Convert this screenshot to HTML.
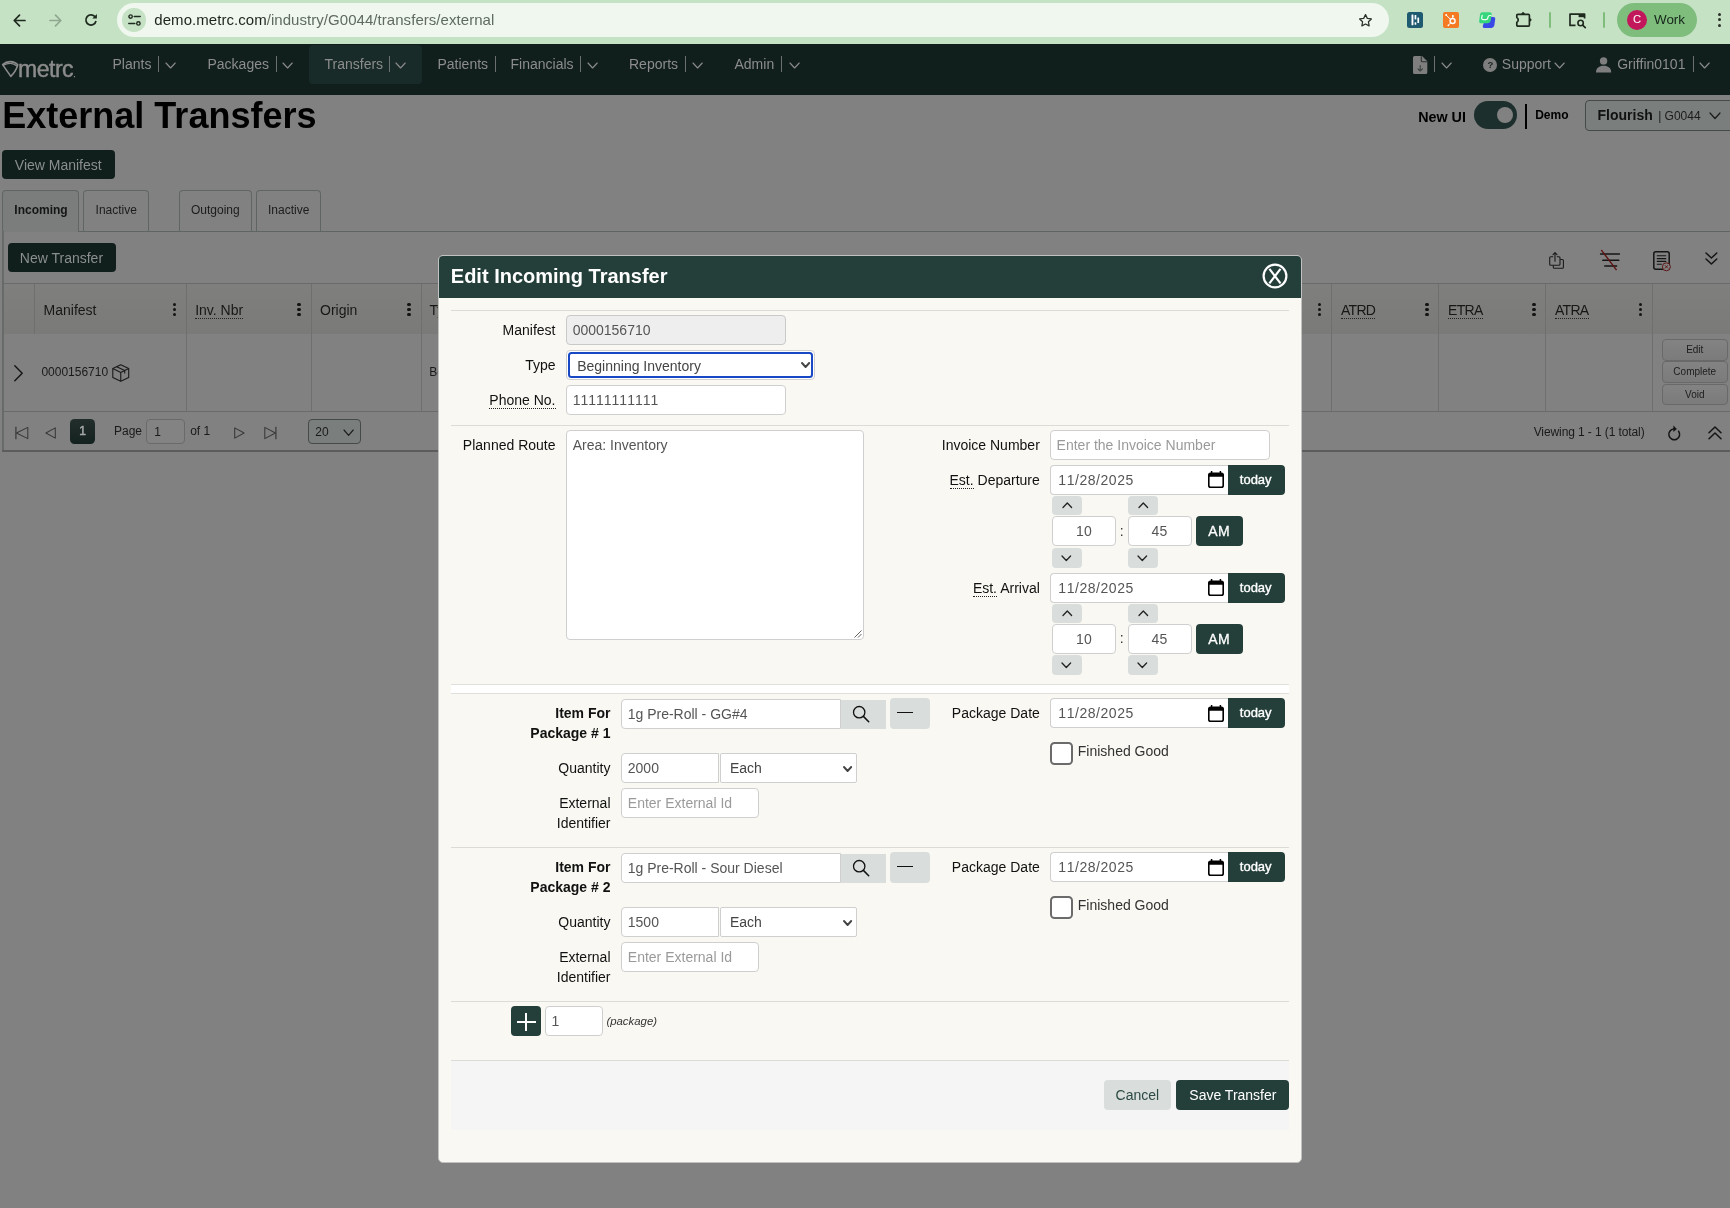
<!DOCTYPE html>
<html lang="en"><head><meta charset="utf-8"><title>External Transfers</title>
<style>
*{box-sizing:border-box;margin:0;padding:0}
html,body{width:1730px;height:1208px;overflow:hidden;background:#818181;font-family:"Liberation Sans",sans-serif;font-size:14px;color:#000}
#root{position:absolute;left:0;top:0;width:1730px;height:1208px;will-change:transform}
.a{position:absolute}
.t{position:absolute;white-space:nowrap;line-height:1}
svg{position:absolute;overflow:visible}
/* chrome */
#chrome{left:0;top:0;width:1730px;height:44px;background:#c6e2c5}
#pill{left:116.800px;top:3px;width:1272.300px;height:34px;border-radius:17px;background:#f0f7ef}
/* nav */
#nav{left:0;top:44px;width:1730px;height:50.6px;background:#101e1c}
.nt{color:#8d8d8d;font-size:14px}
.nsep{position:absolute;width:1px;height:15.500px;top:56.200px;background:#6b6f6d}
/* page */
.dbtn{position:absolute;background:#101e1c;border-radius:4px;color:#8a8f8d;font-size:14px}
.tab{position:absolute;top:190.4px;height:41.5px;border:1px solid #5f6563;border-bottom:none;border-radius:4px 4px 0 0;font-size:12px;color:#1c1c1c}
.vl{position:absolute;width:1px;background:#6f6f6f}
.hl{position:absolute;height:1px;background:#6a6a6a}
.ch{position:absolute;font-size:14px;color:#171717;line-height:1;white-space:nowrap}
.ch.u{border-bottom:1px dotted #222;padding-bottom:0px}
.gbtn{position:absolute;left:1661.5px;width:66.5px;height:21.5px;border:1px solid #696969;border-radius:4px;background:linear-gradient(#838383,#7b7b7b);font-size:10px;color:#1c1c1c;text-align:center;line-height:19px}
/* modal */
#modal{left:438px;top:255px;width:864.200px;height:907.500px;border-radius:5px;background:#f9f8f3;border:1px solid #c2c2c2;overflow:hidden}
#mhead{left:0;top:0;width:100%;height:41.700px;background:#243f3a}
.hr{position:absolute;left:451px;width:838px;height:1px;background:#dbdbd8}
.lbl{position:absolute;white-space:nowrap;line-height:1;font-size:14px;color:#111;text-align:right}
.inp{position:absolute;font-kerning:none;height:29.5px;border:1px solid #cfcfcf;border-radius:4px;background:#fff;font-size:14px;color:#555;line-height:27.5px;padding-left:5.400px;white-space:nowrap;overflow:hidden}
.ph{color:#9a9a9a}
.gb{position:absolute;background:#d9dddb;border-radius:4px}
.db{position:absolute;background:#243f3a;color:#fff;border-radius:4px}
.u2{border-bottom:1px dotted #222}
</style></head>
<body>
<div id="root">
<div class="a" id="chrome">
<div class="a" id="pill"></div>
<svg style="left:13px;top:13.5px" width="13" height="13" viewBox="0 0 13 13"><path d="M12 6.5H1.5M6.5 1.2L1.2 6.5L6.5 11.8" fill="none" stroke="#1f2a1f" stroke-width="1.7" stroke-linecap="round" stroke-linejoin="round"/></svg>
<svg style="left:49px;top:13.5px" width="13" height="13" viewBox="0 0 13 13"><path d="M1 6.5H11.5M6.5 1.2L11.8 6.5L6.5 11.8" fill="none" stroke="#8fa68f" stroke-width="1.7" stroke-linecap="round" stroke-linejoin="round"/></svg>
<svg style="left:85px;top:14px" width="12" height="12" viewBox="0 0 12 12"><path d="M10.200 3.100A5.100 5.100 0 1 0 11 7" fill="none" stroke="#1f2a1f" stroke-width="1.700" stroke-linecap="butt"/><path d="M11.900 .1V4.600H7.300z" fill="#1f2a1f"/></svg>
<div class="a" style="left:122.4px;top:8.4px;width:23.2px;height:23.2px;border-radius:50%;background:#c6e2c5"></div>
<svg style="left:127.5px;top:14px" width="13" height="12" viewBox="0 0 13 12"><circle cx="2.6" cy="2.6" r="1.7" fill="none" stroke="#1f2a1f" stroke-width="1.4"/><path d="M6.2 2.6H12.2M0.8 9.4H6.8" stroke="#1f2a1f" stroke-width="1.5" stroke-linecap="round"/><circle cx="10.4" cy="9.4" r="1.7" fill="none" stroke="#1f2a1f" stroke-width="1.4"/></svg>
<div class="t" style="left:154.3px;top:12.2px;font-size:15px;letter-spacing:0.05px;color:#1d231d">demo.metrc.com<span style="color:#5f6b5f">/industry/G0044/transfers/external</span></div>
<svg style="left:1357.5px;top:12.5px" width="15" height="15" viewBox="0 0 24 24"><path d="M12 2.6l2.9 6 6.5.9-4.7 4.6 1.1 6.5L12 17.5 6.2 20.6l1.1-6.5L2.6 9.5l6.5-.9z" fill="none" stroke="#2a332a" stroke-width="2" stroke-linejoin="round"/></svg>
<div class="a" style="left:1407px;top:12px;width:16px;height:16px;border-radius:2.5px;background:#1e5a70"></div>
<svg style="left:1407px;top:12px" width="16" height="16" viewBox="0 0 16 16"><rect x="4.500" y="2.600" width="1.900" height="10.600" rx=".5" fill="#fff"/><rect x="7.600" y="3" width="1.700" height="4.600" rx=".5" fill="#fff"/><rect x="7.600" y="10.200" width="1.700" height="2.600" rx=".5" fill="#fff"/><rect x="10.400" y="5.500" width="1.700" height="5.600" rx=".5" fill="#fff"/></svg>
<div class="a" style="left:1443px;top:12px;width:16px;height:16px;border-radius:2px;background:#f47a24"></div>
<svg style="left:1443px;top:12px" width="16" height="16" viewBox="0 0 16 16"><circle cx="9.600" cy="9" r="2.500" fill="none" stroke="#fff" stroke-width="1.400"/><path d="M9.800 6.400V4.200M7.600 7.400L3.400 3.300M7.700 10.900L5.600 13" stroke="#fff" stroke-width="1" stroke-linecap="round"/><circle cx="9.900" cy="3.900" r="1" fill="#fff"/><circle cx="3.200" cy="3" r="1" fill="#fff"/><circle cx="5.400" cy="13.300" r=".9" fill="#fff"/></svg>
<svg style="left:1479px;top:12px" width="16" height="16" viewBox="0 0 16 16"><path d="M6.800 5h7.400a2 2 0 0 1 2 2.300l-.9 6.300a3 3 0 0 1-3 2.400H5.800a2 2 0 0 1-2-2.300z" fill="#3a48e6"/><path d="M3 .2h7.600a2 2 0 0 1 2 2.300l-.9 6.300a3 3 0 0 1-3 2.400H2.200a2 2 0 0 1-2-2.300L1 2.400A2.400 2.400 0 0 1 3 .2z" fill="#35d67c"/><path d="M3.200 3.300l-.5 2.600a1.500 1.500 0 0 0 1.500 1.800h2.600a2 2 0 0 0 2-1.600l.3-1.400a1.500 1.500 0 0 1 1.500-1.200h1.200" fill="none" stroke="#f2fff6" stroke-width="1.200" stroke-linecap="round"/></svg>
<svg style="left:1515px;top:11px" width="17" height="17" viewBox="0 0 17 17"><path d="M2.800 3.400H13.400a1 1 0 0 1 1 1V14.100a1 1 0 0 1-1 1H2.800a1 1 0 0 1-1-1V11.400Q4.700 8.900 1.800 6.400V4.400a1 1 0 0 1 1-1Z" fill="none" stroke="#1f2a1f" stroke-width="1.700" stroke-linejoin="round"/><path d="M6.200 2.900Q8.100 -1 10 2.900z" fill="#1f2a1f"/><path d="M14.900 7.100Q18.300 8.900 14.900 10.700z" fill="#1f2a1f"/></svg>
<div class="a" style="left:1549.2px;top:12.4px;width:1.8px;height:15.2px;border-radius:1px;background:#7fbd7d"></div>
<svg style="left:1568.5px;top:12.5px" width="18" height="16" viewBox="0 0 18 16"><path d="M6.5 12.4H1V1.2h14.6v4.2" fill="none" stroke="#1f2a1f" stroke-width="1.7" stroke-linejoin="round"/><rect x="9.6" y="1.2" width="6" height="3" fill="#1f2a1f"/><circle cx="11.6" cy="10" r="2.7" fill="none" stroke="#1f2a1f" stroke-width="1.6"/><path d="M13.7 12.1l2.6 2.6" stroke="#1f2a1f" stroke-width="1.7" stroke-linecap="round"/></svg>
<div class="a" style="left:1603px;top:12.4px;width:1.8px;height:15.2px;border-radius:1px;background:#7fbd7d"></div>
<div class="a" style="left:1616.8px;top:3px;width:80.2px;height:33.8px;border-radius:17px;background:#7fbd7d"></div>
<div class="a" style="left:1626.8px;top:10.1px;width:19.8px;height:19.8px;border-radius:50%;background:#c2185b"></div>
<div class="t" style="left:1632.900px;top:14.400px;font-size:11.300px;color:#fff">C</div>
<div class="t" style="left:1654px;top:13.2px;font-size:13.4px;color:#16241a">Work</div>
<div class="a" style="left:1717.7px;top:13.1px;width:3px;height:3px;border-radius:50%;background:#2a332a"></div>
<div class="a" style="left:1717.7px;top:18.3px;width:3px;height:3px;border-radius:50%;background:#2a332a"></div>
<div class="a" style="left:1717.7px;top:23.5px;width:3px;height:3px;border-radius:50%;background:#2a332a"></div>
</div>
<div class="a" id="nav"></div>
<div class="a" style="left:309.200px;top:44.600px;width:113.300px;height:39.200px;border-radius:4px;background:#192b28"></div>
<svg style="left:1.800px;top:61.200px" width="16.400" height="16" viewBox="0 0 16.400 16"><path d="M.6 3.600C3 1.400 6 .5 8.600 .6c2.600.1 5 .9 7.200 3.200C14.600 8.200 12.400 12 8.800 15.400z" fill="none" stroke="#8c8c8c" stroke-width="1.600" stroke-linejoin="round"/><path d="M1.400 4.300C4 2.600 6.300 2.200 8.600 2.300c2.300.1 4.300.9 6.300 2.700" fill="none" stroke="#8c8c8c" stroke-width="1.300"/></svg>
<div class="t" style="left:18.100px;top:58.200px;font-size:23px;letter-spacing:-0.500px;color:#8c8c8c;-webkit-text-stroke:0.450px #8c8c8c">metrc<span style="font-size:7px;letter-spacing:0;margin-left:0.5px">.</span></div>
<div class="t nt" style="left:112.5px;top:56.600px">Plants</div>
<div class="nsep" style="left:158.25px"></div>
<svg style="left:166.4px;top:63px" width="9.2" height="5"><path d="M0 0 L4.6 5 L9.2 0" fill="none" stroke="#8a8a8a" stroke-width="1.15" stroke-linecap="round" stroke-linejoin="round"/></svg>
<div class="t nt" style="left:207.5px;top:56.600px">Packages</div>
<div class="nsep" style="left:275.5px"></div>
<svg style="left:282.9px;top:63px" width="9.2" height="5"><path d="M0 0 L4.6 5 L9.2 0" fill="none" stroke="#8a8a8a" stroke-width="1.15" stroke-linecap="round" stroke-linejoin="round"/></svg>
<div class="t nt" style="left:324.5px;top:56.600px">Transfers</div>
<div class="nsep" style="left:388.5px"></div>
<svg style="left:396.4px;top:63px" width="9.2" height="5"><path d="M0 0 L4.6 5 L9.2 0" fill="none" stroke="#8a8a8a" stroke-width="1.15" stroke-linecap="round" stroke-linejoin="round"/></svg>
<div class="t nt" style="left:437.5px;top:56.600px">Patients</div>
<div class="nsep" style="left:495.0px"></div>
<div class="t nt" style="left:510.5px;top:56.600px">Financials</div>
<div class="nsep" style="left:580.25px"></div>
<svg style="left:588.4px;top:63px" width="9.2" height="5"><path d="M0 0 L4.6 5 L9.2 0" fill="none" stroke="#8a8a8a" stroke-width="1.15" stroke-linecap="round" stroke-linejoin="round"/></svg>
<div class="t nt" style="left:629px;top:56.600px">Reports</div>
<div class="nsep" style="left:685.25px"></div>
<svg style="left:693.4px;top:63px" width="9.2" height="5"><path d="M0 0 L4.6 5 L9.2 0" fill="none" stroke="#8a8a8a" stroke-width="1.15" stroke-linecap="round" stroke-linejoin="round"/></svg>
<div class="t nt" style="left:734.5px;top:56.600px">Admin</div>
<div class="nsep" style="left:781.25px"></div>
<svg style="left:789.65px;top:63px" width="9.2" height="5"><path d="M0 0 L4.6 5 L9.2 0" fill="none" stroke="#8a8a8a" stroke-width="1.15" stroke-linecap="round" stroke-linejoin="round"/></svg>
<svg style="left:1413px;top:56px" width="15" height="18" viewBox="0 0 15 18"><path d="M1.500 0h7.500L14.300 5.300v11.200A1.500 1.500 0 0 1 12.800 18H1.500A1.500 1.500 0 0 1 0 16.500v-15A1.500 1.500 0 0 1 1.500 0z" fill="#7e7e7e"/><path d="M8.300 .2v4.600a1 1 0 0 0 1 1h4.800" fill="none" stroke="#2a3331" stroke-width="1.100"/><path d="M7.200 9.600v5.200M4.900 12.800l2.300 2.200 2.300-2.200" fill="none" stroke="#3c4442" stroke-width="1.150" stroke-linecap="round" stroke-linejoin="round"/></svg>
<div class="nsep" style="left:1434.25px"></div>
<svg style="left:1442.15px;top:63px" width="9.2" height="5"><path d="M0 0 L4.6 5 L9.2 0" fill="none" stroke="#8a8a8a" stroke-width="1.15" stroke-linecap="round" stroke-linejoin="round"/></svg>
<div class="a" style="left:1483px;top:57.900px;width:14.300px;height:14.300px;border-radius:50%;background:#7e7e7e"></div>
<div class="t" style="left:1487.500px;top:60.400px;font-size:9.600px;font-weight:bold;color:#1c2826">?</div>
<div class="t nt" style="left:1501.800px;top:56.600px">Support</div>
<svg style="left:1555.4px;top:63px" width="9.2" height="5"><path d="M0 0 L4.6 5 L9.2 0" fill="none" stroke="#8a8a8a" stroke-width="1.15" stroke-linecap="round" stroke-linejoin="round"/></svg>
<svg style="left:1596.2px;top:57.2px" width="15.200" height="15.400" viewBox="0 0 15.200 15.400"><circle cx="7.600" cy="3.900" r="3.700" fill="#7e7e7e"/><path d="M0 15.400c0-4.500 3.200-6.700 7.600-6.700s7.600 2.200 7.600 6.700z" fill="#7e7e7e"/></svg>
<div class="t nt" style="left:1617.2px;top:56.600px">Griffin0101</div>
<div class="nsep" style="left:1692.5px"></div>
<svg style="left:1700.4px;top:63px" width="9.2" height="5"><path d="M0 0 L4.6 5 L9.2 0" fill="none" stroke="#8a8a8a" stroke-width="1.15" stroke-linecap="round" stroke-linejoin="round"/></svg>
<div class="t" style="left:2.300px;top:98.200px;font-size:36px;font-weight:bold;color:#000">External Transfers</div>
<div class="t" style="left:1418.2px;top:110.4px;font-size:14.3px;font-weight:bold;color:#000">New UI</div>
<div class="a" style="left:1474px;top:101px;width:43px;height:28px;border-radius:14px;background:#1c2f2c"></div>
<div class="a" style="left:1497.200px;top:106.900px;width:16.300px;height:16.300px;border-radius:50%;background:#818181"></div>
<div class="a" style="left:1525px;top:104px;width:2px;height:25px;background:#000"></div>
<div class="t" style="left:1535.2px;top:109.2px;font-size:12px;font-weight:bold;color:#000">Demo</div>
<div class="a" style="left:1585px;top:100.2px;width:160px;height:30.5px;border:1px solid #444a48;border-radius:4px;background:#7a7e7c"></div>
<div class="t" style="left:1597.5px;top:107.6px;font-size:14px;font-weight:bold;color:#111">Flourish <span style="font-weight:normal;font-size:12px;color:#1c1c1c;position:relative;top:0.600px;margin-left:1.500px">|&nbsp;G0044</span></div>
<svg style="left:1709.6px;top:113px" width="10" height="5.5"><path d="M0 0 L5.0 5.5 L10 0" fill="none" stroke="#1a1a1a" stroke-width="1.2" stroke-linecap="round" stroke-linejoin="round"/></svg>
<div class="dbtn" style="left:2.4px;top:150.4px;width:112.2px;height:29px"></div><div class="t" style="left:14.8px;top:157.6px;font-size:14px;color:#8a8f8d">View Manifest</div>
<div class="hl" style="left:2.4px;top:231.4px;width:1728px;background:#5f6563"></div>
<div class="tab" style="left:2.4px;width:76.4px;background:#7b7d7c;height:42px"></div><div class="t" style="left:14.3px;top:204.3px;font-size:12px;font-weight:bold;color:#151515">Incoming</div>
<div class="tab" style="left:83.4px;width:65.4px"></div><div class="t" style="left:95.6px;top:204.3px;font-size:12px;color:#1c1c1c">Inactive</div>
<div class="tab" style="left:179.4px;width:72.4px"></div><div class="t" style="left:191px;top:204.3px;font-size:12px;color:#1c1c1c">Outgoing</div>
<div class="tab" style="left:256.4px;width:64.8px"></div><div class="t" style="left:268px;top:204.3px;font-size:12px;color:#1c1c1c">Inactive</div>
<div class="vl" style="left:2.4px;top:231.4px;height:220px;background:#666b69;width:1.3px"></div>
<div class="dbtn" style="left:7.6px;top:243.4px;width:108px;height:29px"></div><div class="t" style="left:19.8px;top:250.8px;font-size:14px;color:#8a8f8d">New Transfer</div>
<svg style="left:1548.500px;top:251.500px" width="15" height="17.500" viewBox="0 0 15 17.500"><path d="M4.200 4.800H1.700a1 1 0 0 0-1 1v6.400a1 1 0 0 0 1 1H10a1 1 0 0 0 1-1V5.800a1 1 0 0 0-1-1H7.800" fill="none" stroke="#1a1a1a" stroke-width="1.100"/><path d="M4.300 13.400v1.900a1 1 0 0 0 1 1H13.400a1 1 0 0 0 1-1V8.500a1 1 0 0 0-1-1H11.200" fill="none" stroke="#1a1a1a" stroke-width="1.100"/><path d="M6 9.200V.7M4 2.600L6 .6 8 2.600" fill="none" stroke="#1a1a1a" stroke-width="1.100" stroke-linecap="round" stroke-linejoin="round"/></svg>
<svg style="left:1599.5px;top:250px" width="20" height="20" viewBox="0 0 20 20"><path d="M.6 4h18.800M2.800 10.200h16M4.800 16h11.800" stroke="#141414" stroke-width="1.500" stroke-linecap="round"/><path d="M1.600 .4L16.200 19.600" stroke="#5e1414" stroke-width="1.400" stroke-linecap="round"/></svg>
<svg style="left:1653px;top:250.700px" width="20" height="21" viewBox="0 0 20 21"><rect x=".8" y=".8" width="15.400" height="17.400" rx="2" fill="none" stroke="#141414" stroke-width="1.500"/><path d="M3.800 4.800h9.400M3.800 7.600h9.400M3.800 10.400h9.400M3.800 13.200h5" stroke="#141414" stroke-width="1.100"/><circle cx="13.400" cy="15.800" r="4" fill="#818181" stroke="#5e1414" stroke-width="1"/><path d="M11.800 14.200l3.200 3.200M15 14.200l-3.200 3.200" stroke="#5e1414" stroke-width=".9"/></svg>
<svg style="left:1705.7px;top:252.8px" width="10.8" height="5"><path d="M0 0 L5.4 5 L10.8 0" fill="none" stroke="#141414" stroke-width="1.5" stroke-linecap="round" stroke-linejoin="round"/></svg>
<svg style="left:1705.7px;top:259.4px" width="10.8" height="5"><path d="M0 0 L5.4 5 L10.8 0" fill="none" stroke="#141414" stroke-width="1.5" stroke-linecap="round" stroke-linejoin="round"/></svg>
<div class="a" style="left:3.5px;top:284px;width:1727px;height:50px;background:linear-gradient(#7f807e,#7a7b78)"></div>
<div class="hl" style="left:3px;top:283.4px;width:1727px"></div>
<div class="hl" style="left:3px;top:411px;width:1727px"></div>
<div class="a" style="left:2.400px;top:449.900px;width:1728px;height:2.100px;background:#5c5c5c"></div>
<div class="vl" style="left:34px;top:284px;height:50px"></div>
<div class="vl" style="left:186px;top:284px;height:127px"></div>
<div class="vl" style="left:311px;top:284px;height:127px"></div>
<div class="vl" style="left:421px;top:284px;height:127px"></div>
<div class="vl" style="left:1331.2px;top:284px;height:127px"></div>
<div class="vl" style="left:1438.2px;top:284px;height:127px"></div>
<div class="vl" style="left:1545.2px;top:284px;height:127px"></div>
<div class="vl" style="left:1652.2px;top:284px;height:127px"></div>
<div class="ch" style="left:43.6px;top:303px">Manifest</div><div class="a" style="left:172.85px;top:303.05px;width:3.300px;height:3.300px;border-radius:50%;background:#141414"></div><div class="a" style="left:172.85px;top:307.95000000000005px;width:3.300px;height:3.300px;border-radius:50%;background:#141414"></div><div class="a" style="left:172.85px;top:312.85px;width:3.300px;height:3.300px;border-radius:50%;background:#141414"></div>
<div class="ch u" style="left:195.2px;top:303px;height:16px">Inv. Nbr</div><div class="a" style="left:297.35px;top:303.05px;width:3.300px;height:3.300px;border-radius:50%;background:#141414"></div><div class="a" style="left:297.35px;top:307.95000000000005px;width:3.300px;height:3.300px;border-radius:50%;background:#141414"></div><div class="a" style="left:297.35px;top:312.85px;width:3.300px;height:3.300px;border-radius:50%;background:#141414"></div>
<div class="ch" style="left:320px;top:303px">Origin</div><div class="a" style="left:407.35px;top:303.05px;width:3.300px;height:3.300px;border-radius:50%;background:#141414"></div><div class="a" style="left:407.35px;top:307.95000000000005px;width:3.300px;height:3.300px;border-radius:50%;background:#141414"></div><div class="a" style="left:407.35px;top:312.85px;width:3.300px;height:3.300px;border-radius:50%;background:#141414"></div>
<div class="ch" style="left:429.6px;top:303px">Ty</div>
<div class="a" style="left:1318.1px;top:303.05px;width:3.300px;height:3.300px;border-radius:50%;background:#141414"></div><div class="a" style="left:1318.1px;top:307.95000000000005px;width:3.300px;height:3.300px;border-radius:50%;background:#141414"></div><div class="a" style="left:1318.1px;top:312.85px;width:3.300px;height:3.300px;border-radius:50%;background:#141414"></div>
<div class="ch u" style="left:1341px;top:303.3px;height:16px;letter-spacing:-0.7px">ATRD</div><div class="a" style="left:1425.35px;top:303.05px;width:3.300px;height:3.300px;border-radius:50%;background:#141414"></div><div class="a" style="left:1425.35px;top:307.95000000000005px;width:3.300px;height:3.300px;border-radius:50%;background:#141414"></div><div class="a" style="left:1425.35px;top:312.85px;width:3.300px;height:3.300px;border-radius:50%;background:#141414"></div>
<div class="ch u" style="left:1448px;top:303.3px;height:16px;letter-spacing:-0.7px">ETRA</div><div class="a" style="left:1532.35px;top:303.05px;width:3.300px;height:3.300px;border-radius:50%;background:#141414"></div><div class="a" style="left:1532.35px;top:307.95000000000005px;width:3.300px;height:3.300px;border-radius:50%;background:#141414"></div><div class="a" style="left:1532.35px;top:312.85px;width:3.300px;height:3.300px;border-radius:50%;background:#141414"></div>
<div class="ch u" style="left:1555px;top:303.3px;height:16px;letter-spacing:-0.7px">ATRA</div><div class="a" style="left:1638.85px;top:303.05px;width:3.300px;height:3.300px;border-radius:50%;background:#141414"></div><div class="a" style="left:1638.85px;top:307.95000000000005px;width:3.300px;height:3.300px;border-radius:50%;background:#141414"></div><div class="a" style="left:1638.85px;top:312.85px;width:3.300px;height:3.300px;border-radius:50%;background:#141414"></div>
<svg style="left:14px;top:364.5px" width="9" height="16.500" viewBox="0 0 9 16.500"><path d="M.8 .8L8.200 8.200.8 15.700" fill="none" stroke="#141414" stroke-width="1.400" stroke-linecap="round" stroke-linejoin="round"/></svg>
<div class="t" style="left:41.4px;top:365.6px;font-size:12px;color:#1a1a1a">0000156710</div>
<svg style="left:112px;top:363.700px" width="17.500" height="18" viewBox="0 0 17.500 18"><path d="M8.750 .8L16.700 4.600V13.400L8.750 17.200.8 13.400V4.600z" fill="none" stroke="#1a1a1a" stroke-width="1.100" stroke-linejoin="round"/><path d="M.8 4.600L8.750 8.400 16.700 4.600M8.750 8.400V17.200M4.700 2.700L12.700 6.500V9.500" fill="none" stroke="#1a1a1a" stroke-width="1.100" stroke-linejoin="round"/></svg>
<div class="t" style="left:429.2px;top:365.6px;font-size:12px;color:#1a1a1a">Be</div>
<div class="gbtn" style="top:339.200px">Edit</div><div class="gbtn" style="top:361.300px">Complete</div><div class="gbtn" style="top:383.500px">Void</div>
<svg style="left:14.700px;top:426px" width="14" height="14" viewBox="0 0 14 14"><path d="M.9 .8v12.400" stroke="#383838" stroke-width="1.200"/><path d="M12.800 1.400v11.200L1.400 7z" fill="none" stroke="#383838" stroke-width="1.050" stroke-linejoin="round"/></svg>
<svg style="left:45.300px;top:427px" width="11" height="12" viewBox="0 0 11 12"><path d="M10.300 .9v10.200L.9 6z" fill="none" stroke="#383838" stroke-width="1.050" stroke-linejoin="round"/></svg>
<div class="a" style="left:70.200px;top:419px;width:24.700px;height:24.700px;border-radius:4.500px;background:linear-gradient(#222e2c,#13211f)"></div><div class="t" style="left:79.300px;top:425.200px;font-size:12px;color:#a4a8a6;-webkit-text-stroke:0.500px #a4a8a6">1</div>
<div class="t" style="left:114px;top:425.300px;font-size:12px;color:#1a1a1a">Page</div>
<div class="a" style="left:146.200px;top:419.400px;width:38.400px;height:25px;border:1px solid #6a6a6a;border-radius:4px;background:#838383"></div><div class="t" style="left:154.300px;top:426px;font-size:12px;color:#1a1a1a">1</div>
<div class="t" style="left:190.200px;top:425.300px;font-size:12px;color:#1a1a1a">of 1</div>
<svg style="left:233.500px;top:427px" width="11" height="12" viewBox="0 0 11 12"><path d="M.7 .9v10.200L10.100 6z" fill="none" stroke="#383838" stroke-width="1.050" stroke-linejoin="round"/></svg>
<svg style="left:264.300px;top:426px" width="14" height="14" viewBox="0 0 14 14"><path d="M11.900 .8v12.400" stroke="#383838" stroke-width="1.200"/><path d="M.8 1.400v11.200L11.400 7z" fill="none" stroke="#383838" stroke-width="1.050" stroke-linejoin="round"/></svg>
<div class="a" style="left:308.200px;top:419.400px;width:52.400px;height:25px;border:1px solid #444a48;border-radius:4px;background:#7a7e7c"></div><div class="t" style="left:315.300px;top:426px;font-size:12px;color:#1a1a1a">20</div>
<svg style="left:343.7px;top:429.6px" width="9.2" height="5.3"><path d="M0 0 L4.6 5.3 L9.2 0" fill="none" stroke="#1c1c1c" stroke-width="1.15" stroke-linecap="round" stroke-linejoin="round"/></svg>
<div class="t" style="left:1533.700px;top:425.600px;font-size:12px;letter-spacing:-0.100px;color:#1a1a1a">Viewing 1 - 1 (1 total)</div>
<svg style="left:1666.700px;top:425.300px" width="14" height="15" viewBox="0 0 14 15"><path d="M11.600 5.200A5.400 5.400 0 1 1 6.800 3" fill="none" stroke="#141414" stroke-width="1.500" stroke-linecap="round" transform="translate(0,1)"/><path d="M6.400 .6l3.400 3.400-3.400 3z" fill="#141414"/></svg>
<svg style="left:1709px;top:426.5px" width="12" height="5.8"><path d="M0 5.8 L6.0 0 L12 5.8" fill="none" stroke="#141414" stroke-width="1.5" stroke-linecap="round" stroke-linejoin="round"/></svg>
<svg style="left:1709px;top:433px" width="12" height="5.8"><path d="M0 5.8 L6.0 0 L12 5.8" fill="none" stroke="#141414" stroke-width="1.5" stroke-linecap="round" stroke-linejoin="round"/></svg>
<div class="a" id="modal"><div class="a" id="mhead"></div></div>
<div class="t" style="left:450.800px;top:265.700px;font-size:20px;font-weight:bold;color:#fff">Edit Incoming Transfer</div>
<svg style="left:1262px;top:263.300px" width="26" height="26" viewBox="0 0 26 26"><circle cx="13" cy="13" r="11.400" fill="none" stroke="#fff" stroke-width="2.200"/><path d="M7.400 5.800L18.500 20.400M18.500 5.800L7.400 20.400" stroke="#fff" stroke-width="2.200"/></svg>
<div class="hr" style="top:310px;"></div>
<div class="lbl" style="right:1174.5px;top:323.35px;">Manifest</div>
<div class="inp" style="left:566.25px;top:315.25px;width:220px;height:29.5px;padding:0;background:#eeeeee;border-color:#c9c9c9;"></div>
<div class="t" style="left:572.65px;top:323.15px;font-size:14px;color:#555;font-kerning:none">0000156710</div>
<div class="lbl" style="right:1174.5px;top:358.35px;">Type</div>
<div class="a" style="left:566.250px;top:350.250px;width:248.800px;height:29.500px;border:1px solid #cfcfcf;border-radius:4px;background:#fff"></div>
<div class="a" style="left:568.400px;top:352px;width:244.600px;height:26px;border:2px solid #1848c4;border-radius:3.500px"></div>
<div class="t" style="left:577.200px;top:358.500px;font-size:14px;color:#444">Beginning Inventory</div>
<svg style="left:802.2px;top:363.1px" width="7.2" height="4"><path d="M0 0 L3.6 4 L7.2 0" fill="none" stroke="#444" stroke-width="1.9" stroke-linecap="round" stroke-linejoin="round"/></svg>
<div class="lbl" style="right:1174.5px;top:393.35px;"><span class="u2">Phone No.</span></div>
<div class="inp" style="left:566.25px;top:385.25px;width:220px;height:29.5px;padding:0;"></div>
<div class="t" style="left:572.65px;top:393.15px;font-size:14px;color:#555;font-kerning:none">11111111111</div>
<div class="hr" style="top:424.6px;"></div>
<div class="lbl" style="right:1174.5px;top:438.15px;">Planned Route</div>
<div class="inp" style="left:566.25px;top:430.25px;width:298px;height:209.25px;padding:0;"></div>
<div class="t" style="left:572.65px;top:438.15px;font-size:14px;color:#555;font-kerning:none">Area: Inventory</div>
<svg style="left:854px;top:629.500px" width="8" height="8" viewBox="0 0 8 8"><path d="M.5 7.500L7.500 .5M4 7.500L7.500 4" stroke="#555" stroke-width=".9"/></svg>
<div class="lbl" style="right:690.2px;top:437.95px;">Invoice Number</div>
<div class="inp ph" style="left:1050.2px;top:430.25px;width:219.5px;height:29.5px;padding:0;"></div>
<div class="t" style="left:1056.60px;top:438.15px;font-size:14px;color:#9a9a9a;font-kerning:none">Enter the Invoice Number</div>
<div class="lbl" style="right:690.2px;top:473.05px;"><span class="u2">Est.</span> Departure</div>
<div class="a" style="left:1050.200px;top:465.1px;width:178.500px;height:29.550px;border:1px solid #cfcfcf;border-right:none;border-radius:4px 0 0 4px;background:#fff"></div>
<div class="t" style="left:1058.300px;top:472.5px;font-size:14px;color:#555;letter-spacing:0.550px;font-kerning:none">11/28/2025</div>
<svg style="left:1208.2px;top:470.8px" width="16" height="17" viewBox="0 0 16 17"><path d="M3.600 0v2.500M12.400 0v2.500" stroke="#000" stroke-width="1.500"/><rect x=".8" y="2.300" width="14.400" height="14" rx="1.800" fill="#fff" stroke="#000" stroke-width="1.600"/><path d="M.8 3.300a1 1 0 0 1 1-1h12.400a1 1 0 0 1 1 1v2.500H.8z" fill="#000"/></svg>
<div class="db" style="left:1228.200px;top:465.1px;width:56.700px;height:29.550px;border-radius:0 4px 4px 0"></div>
<div class="t" style="left:1239.800px;top:473.0px;font-size:13px;color:#fff;-webkit-text-stroke:0.350px #fff">today</div>
<div class="gb" style="left:1052px;top:496.1px;width:29.800px;height:19.200px"></div>
<svg style="left:1063px;top:503.1px" width="8.6" height="4.5"><path d="M0 4.5 L4.3 0 L8.6 4.5" fill="none" stroke="#222" stroke-width="1.3" stroke-linecap="round" stroke-linejoin="round"/></svg>
<div class="gb" style="left:1052px;top:548.0px;width:29.800px;height:19.500px"></div>
<svg style="left:1062.2px;top:555.7px" width="8.6" height="4.5"><path d="M0 0 L4.3 4.5 L8.6 0" fill="none" stroke="#222" stroke-width="1.3" stroke-linecap="round" stroke-linejoin="round"/></svg>
<div class="gb" style="left:1128px;top:496.1px;width:29.800px;height:19.200px"></div>
<svg style="left:1139px;top:503.1px" width="8.6" height="4.5"><path d="M0 4.5 L4.3 0 L8.6 4.5" fill="none" stroke="#222" stroke-width="1.3" stroke-linecap="round" stroke-linejoin="round"/></svg>
<div class="gb" style="left:1128px;top:548.0px;width:29.800px;height:19.500px"></div>
<svg style="left:1138.2px;top:555.7px" width="8.6" height="4.5"><path d="M0 0 L4.3 4.5 L8.6 0" fill="none" stroke="#222" stroke-width="1.3" stroke-linecap="round" stroke-linejoin="round"/></svg>
<div class="inp" style="left:1052px;top:516.2px;width:63.8px;height:29.5px;padding:0;padding:0;"></div>
<div class="t" style="left:1052px;width:63.800px;text-align:center;top:524.0px;color:#555">10</div>
<div class="t" style="left:1119.800px;top:523.5px;color:#333">:</div>
<div class="inp" style="left:1128px;top:516.2px;width:63.8px;height:29.5px;padding:0;padding:0;"></div>
<div class="t" style="left:1127.500px;width:63.800px;text-align:center;top:524.0px;color:#555">45</div>
<div class="db" style="left:1196.200px;top:516.2px;width:46.600px;height:29.500px"></div>
<div class="t" style="left:1208.200px;top:524.0px;color:#fff;font-size:14px;letter-spacing:0.500px;-webkit-text-stroke:0.300px #fff">AM</div>
<div class="lbl" style="right:690.2px;top:580.85px;"><span class="u2">Est.</span> Arrival</div>
<div class="a" style="left:1050.200px;top:573.3px;width:178.500px;height:29.550px;border:1px solid #cfcfcf;border-right:none;border-radius:4px 0 0 4px;background:#fff"></div>
<div class="t" style="left:1058.300px;top:580.6999999999999px;font-size:14px;color:#555;letter-spacing:0.550px;font-kerning:none">11/28/2025</div>
<svg style="left:1208.2px;top:579.0px" width="16" height="17" viewBox="0 0 16 17"><path d="M3.600 0v2.500M12.400 0v2.500" stroke="#000" stroke-width="1.500"/><rect x=".8" y="2.300" width="14.400" height="14" rx="1.800" fill="#fff" stroke="#000" stroke-width="1.600"/><path d="M.8 3.300a1 1 0 0 1 1-1h12.400a1 1 0 0 1 1 1v2.500H.8z" fill="#000"/></svg>
<div class="db" style="left:1228.200px;top:573.3px;width:56.700px;height:29.550px;border-radius:0 4px 4px 0"></div>
<div class="t" style="left:1239.800px;top:581.1999999999999px;font-size:13px;color:#fff;-webkit-text-stroke:0.350px #fff">today</div>
<div class="gb" style="left:1052px;top:603.9px;width:29.800px;height:19.200px"></div>
<svg style="left:1063px;top:610.9px" width="8.6" height="4.5"><path d="M0 4.5 L4.3 0 L8.6 4.5" fill="none" stroke="#222" stroke-width="1.3" stroke-linecap="round" stroke-linejoin="round"/></svg>
<div class="gb" style="left:1052px;top:655.0999999999999px;width:29.800px;height:19.500px"></div>
<svg style="left:1062.2px;top:662.8px" width="8.6" height="4.5"><path d="M0 0 L4.3 4.5 L8.6 0" fill="none" stroke="#222" stroke-width="1.3" stroke-linecap="round" stroke-linejoin="round"/></svg>
<div class="gb" style="left:1128px;top:603.9px;width:29.800px;height:19.200px"></div>
<svg style="left:1139px;top:610.9px" width="8.6" height="4.5"><path d="M0 4.5 L4.3 0 L8.6 4.5" fill="none" stroke="#222" stroke-width="1.3" stroke-linecap="round" stroke-linejoin="round"/></svg>
<div class="gb" style="left:1128px;top:655.0999999999999px;width:29.800px;height:19.500px"></div>
<svg style="left:1138.2px;top:662.8px" width="8.6" height="4.5"><path d="M0 0 L4.3 4.5 L8.6 0" fill="none" stroke="#222" stroke-width="1.3" stroke-linecap="round" stroke-linejoin="round"/></svg>
<div class="inp" style="left:1052px;top:624.0px;width:63.8px;height:29.5px;padding:0;padding:0;"></div>
<div class="t" style="left:1052px;width:63.800px;text-align:center;top:631.8px;color:#555">10</div>
<div class="t" style="left:1119.800px;top:631.3px;color:#333">:</div>
<div class="inp" style="left:1128px;top:624.0px;width:63.8px;height:29.5px;padding:0;padding:0;"></div>
<div class="t" style="left:1127.500px;width:63.800px;text-align:center;top:631.8px;color:#555">45</div>
<div class="db" style="left:1196.200px;top:624.0px;width:46.600px;height:29.500px"></div>
<div class="t" style="left:1208.200px;top:631.8px;color:#fff;font-size:14px;letter-spacing:0.500px;-webkit-text-stroke:0.300px #fff">AM</div>
<div class="a" style="left:451px;top:684px;width:838px;height:10px;background:#fff;border-top:1px solid #dfdfdb;border-bottom:1px solid #dfdfdb"></div>
<div class="lbl" style="right:1119.5px;top:706.15px;font-weight:bold;">Item For</div>
<div class="lbl" style="right:1119.5px;top:726.35px;font-weight:bold;">Package # 1</div>
<div class="inp" style="left:621.3px;top:699.45px;width:219.8px;height:29.3px;padding:0;border-radius:4px 0 0 4px;"></div>
<div class="t" style="left:627.70px;top:707.15px;font-size:14px;color:#555;font-kerning:none">1g Pre-Roll - GG#4</div>
<div class="gb" style="left:840.800px;top:699.5px;width:45.200px;height:29.300px;border-radius:0"></div>
<svg style="left:851.600px;top:705.3px" width="18" height="18" viewBox="0 0 18 18"><circle cx="7.200" cy="7.200" r="5.700" fill="none" stroke="#111" stroke-width="1.300"/><path d="M11.400 11.400L16.700 16.700" stroke="#111" stroke-width="1.500" stroke-linecap="round"/></svg>
<div class="gb" style="left:890.300px;top:697.8px;width:39.700px;height:31px"></div>
<div class="a" style="left:897px;top:711.7px;width:16px;height:1.800px;background:#111"></div>
<div class="lbl" style="right:690.2px;top:705.95px;">Package Date</div>
<div class="a" style="left:1050.200px;top:698.2px;width:178.500px;height:29.550px;border:1px solid #cfcfcf;border-right:none;border-radius:4px 0 0 4px;background:#fff"></div>
<div class="t" style="left:1058.300px;top:705.6px;font-size:14px;color:#555;letter-spacing:0.550px;font-kerning:none">11/28/2025</div>
<svg style="left:1208.2px;top:705.3000000000001px" width="16" height="17" viewBox="0 0 16 17"><path d="M3.600 0v2.500M12.400 0v2.500" stroke="#000" stroke-width="1.500"/><rect x=".8" y="2.300" width="14.400" height="14" rx="1.800" fill="#fff" stroke="#000" stroke-width="1.600"/><path d="M.8 3.300a1 1 0 0 1 1-1h12.400a1 1 0 0 1 1 1v2.500H.8z" fill="#000"/></svg>
<div class="db" style="left:1228.200px;top:698.2px;width:56.700px;height:29.550px;border-radius:0 4px 4px 0"></div>
<div class="t" style="left:1239.800px;top:706.1px;font-size:13px;color:#fff;-webkit-text-stroke:0.350px #fff">today</div>
<div class="a" style="left:1050.300px;top:742.3px;width:23.200px;height:23.200px;border:2px solid #6b6b6b;border-radius:4.500px;background:#fff"></div>
<div class="t" style="left:1077.800px;top:744.3px;color:#333">Finished Good</div>
<div class="lbl" style="right:1119.5px;top:761.05px;">Quantity</div>
<div class="inp" style="left:621.4px;top:753.45px;width:97.5px;height:29.2px;padding:0;border-radius:4px 0 0 4px;"></div>
<div class="t" style="left:627.80px;top:761.15px;font-size:14px;color:#555;font-kerning:none">2000</div>
<div class="a" style="left:719.600px;top:753.45px;width:137.200px;height:29.200px;border:1px solid #cfcfcf;border-radius:2px;background:#fff"></div>
<div class="t" style="left:730px;top:761.2px;color:#444">Each</div>
<svg style="left:844.4px;top:766.6px" width="7.2" height="4"><path d="M0 0 L3.6 4 L7.2 0" fill="none" stroke="#444" stroke-width="1.9" stroke-linecap="round" stroke-linejoin="round"/></svg>
<div class="lbl" style="right:1119.5px;top:796.15px;">External</div>
<div class="lbl" style="right:1119.5px;top:816.15px;">Identifier</div>
<div class="inp ph" style="left:621.4px;top:788.4px;width:137.5px;height:29.2px;padding:0;"></div>
<div class="t" style="left:627.80px;top:796.15px;font-size:14px;color:#9a9a9a;font-kerning:none">Enter External Id</div>
<div class="hr" style="top:847.4px;"></div>
<div class="lbl" style="right:1119.5px;top:860.15px;font-weight:bold;">Item For</div>
<div class="lbl" style="right:1119.5px;top:880.35px;font-weight:bold;">Package # 2</div>
<div class="inp" style="left:621.3px;top:853.45px;width:219.8px;height:29.3px;padding:0;border-radius:4px 0 0 4px;"></div>
<div class="t" style="left:627.70px;top:861.15px;font-size:14px;color:#555;font-kerning:none">1g Pre-Roll - Sour Diesel</div>
<div class="gb" style="left:840.800px;top:853.5px;width:45.200px;height:29.300px;border-radius:0"></div>
<svg style="left:851.600px;top:859.3px" width="18" height="18" viewBox="0 0 18 18"><circle cx="7.200" cy="7.200" r="5.700" fill="none" stroke="#111" stroke-width="1.300"/><path d="M11.400 11.400L16.700 16.700" stroke="#111" stroke-width="1.500" stroke-linecap="round"/></svg>
<div class="gb" style="left:890.300px;top:851.8px;width:39.700px;height:31px"></div>
<div class="a" style="left:897px;top:865.7px;width:16px;height:1.800px;background:#111"></div>
<div class="lbl" style="right:690.2px;top:859.95px;">Package Date</div>
<div class="a" style="left:1050.200px;top:852.2px;width:178.500px;height:29.550px;border:1px solid #cfcfcf;border-right:none;border-radius:4px 0 0 4px;background:#fff"></div>
<div class="t" style="left:1058.300px;top:859.6px;font-size:14px;color:#555;letter-spacing:0.550px;font-kerning:none">11/28/2025</div>
<svg style="left:1208.2px;top:859.3000000000001px" width="16" height="17" viewBox="0 0 16 17"><path d="M3.600 0v2.500M12.400 0v2.500" stroke="#000" stroke-width="1.500"/><rect x=".8" y="2.300" width="14.400" height="14" rx="1.800" fill="#fff" stroke="#000" stroke-width="1.600"/><path d="M.8 3.300a1 1 0 0 1 1-1h12.400a1 1 0 0 1 1 1v2.500H.8z" fill="#000"/></svg>
<div class="db" style="left:1228.200px;top:852.2px;width:56.700px;height:29.550px;border-radius:0 4px 4px 0"></div>
<div class="t" style="left:1239.800px;top:860.1px;font-size:13px;color:#fff;-webkit-text-stroke:0.350px #fff">today</div>
<div class="a" style="left:1050.300px;top:896.3px;width:23.200px;height:23.200px;border:2px solid #6b6b6b;border-radius:4.500px;background:#fff"></div>
<div class="t" style="left:1077.800px;top:898.3px;color:#333">Finished Good</div>
<div class="lbl" style="right:1119.5px;top:915.05px;">Quantity</div>
<div class="inp" style="left:621.4px;top:907.45px;width:97.5px;height:29.2px;padding:0;border-radius:4px 0 0 4px;"></div>
<div class="t" style="left:627.80px;top:915.15px;font-size:14px;color:#555;font-kerning:none">1500</div>
<div class="a" style="left:719.600px;top:907.45px;width:137.200px;height:29.200px;border:1px solid #cfcfcf;border-radius:2px;background:#fff"></div>
<div class="t" style="left:730px;top:915.2px;color:#444">Each</div>
<svg style="left:844.4px;top:920.6px" width="7.2" height="4"><path d="M0 0 L3.6 4 L7.2 0" fill="none" stroke="#444" stroke-width="1.9" stroke-linecap="round" stroke-linejoin="round"/></svg>
<div class="lbl" style="right:1119.5px;top:950.15px;">External</div>
<div class="lbl" style="right:1119.5px;top:970.15px;">Identifier</div>
<div class="inp ph" style="left:621.4px;top:942.4px;width:137.5px;height:29.2px;padding:0;"></div>
<div class="t" style="left:627.80px;top:950.15px;font-size:14px;color:#9a9a9a;font-kerning:none">Enter External Id</div>
<div class="hr" style="top:1001.3px;"></div>
<div class="db" style="left:510.800px;top:1006px;width:30.200px;height:29.800px"></div>
<div class="a" style="left:517px;top:1020.700px;width:18.600px;height:2px;background:#fff"></div><div class="a" style="left:525.300px;top:1012.700px;width:2px;height:18.600px;background:#fff"></div>
<div class="inp" style="left:545.2px;top:1006.1px;width:57.7px;height:29.5px;padding:0;"></div>
<div class="t" style="left:551.60px;top:1014.15px;font-size:14px;color:#555;font-kerning:none">1</div>
<div class="t" style="left:606.400px;top:1015.600px;font-size:11.400px;font-style:italic;color:#333">(package)</div>
<div class="hr" style="top:1060px;"></div>
<div class="a" style="left:451px;top:1061px;width:838px;height:68.600px;background:#f5f5f5"></div>
<div class="gb" style="left:1104px;top:1080.200px;width:67px;height:29.600px"></div><div class="t" style="left:1115.600px;top:1088px;color:#2c4a44">Cancel</div>
<div class="db" style="left:1176.200px;top:1080.200px;width:112.800px;height:29.600px"></div><div class="t" style="left:1189.300px;top:1088px;color:#fff">Save Transfer</div>
</div>
</body></html>
